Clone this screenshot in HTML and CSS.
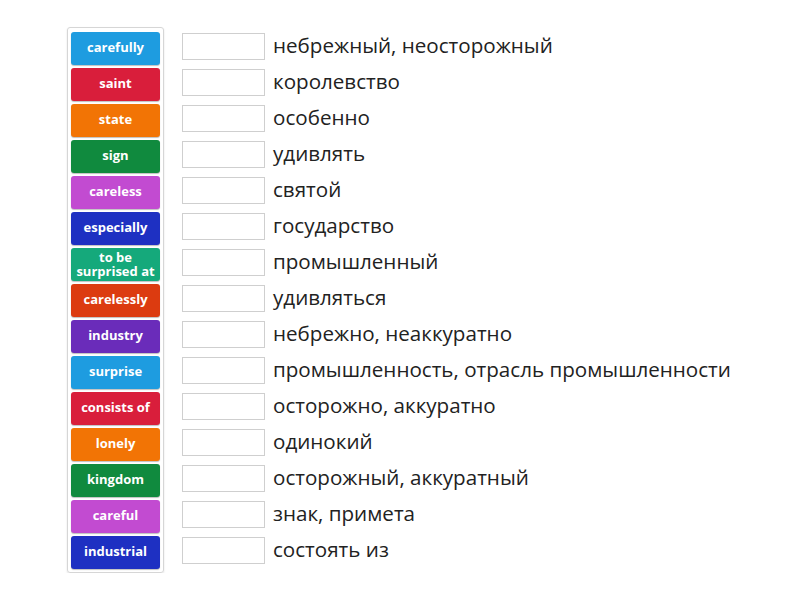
FILE: index.html
```html
<!DOCTYPE html>
<html lang="ru">
<head>
	<meta charset="UTF-8">
	<title>Match up</title>
<link rel="stylesheet" href="styles.css">
</head>
<body>
<div class="board">
	<ul class="words">
		<li class="c1">carefully</li>
		<li class="c2">saint</li>
		<li class="c3">state</li>
		<li class="c4">sign</li>
		<li class="c5">careless</li>
		<li class="c6">especially</li>
		<li class="c7 two">to be surprised at</li>
		<li class="c8">carelessly</li>
		<li class="c9">industry</li>
		<li class="c1">surprise</li>
		<li class="c2">consists of</li>
		<li class="c3">lonely</li>
		<li class="c4">kingdom</li>
		<li class="c5">careful</li>
		<li class="c6">industrial</li>
	</ul>
	<ul class="defs">
		<li><span class="slot"></span><span>небрежный, неосторожный</span></li>
		<li><span class="slot"></span><span>королевство</span></li>
		<li><span class="slot"></span><span>особенно</span></li>
		<li><span class="slot"></span><span>удивлять</span></li>
		<li><span class="slot"></span><span>святой</span></li>
		<li><span class="slot"></span><span>государство</span></li>
		<li><span class="slot"></span><span>промышленный</span></li>
		<li><span class="slot"></span><span>удивляться</span></li>
		<li><span class="slot"></span><span>небрежно, неаккуратно</span></li>
		<li><span class="slot"></span><span>промышленность, отрасль промышленности</span></li>
		<li><span class="slot"></span><span>осторожно, аккуратно</span></li>
		<li><span class="slot"></span><span>одинокий</span></li>
		<li><span class="slot"></span><span>осторожный, аккуратный</span></li>
		<li><span class="slot"></span><span>знак, примета</span></li>
		<li><span class="slot"></span><span>состоять из</span></li>
	</ul>
</div>
</body>
</html>
```

FILE: styles.css
```css
* { margin:0; padding:0; list-style:none; box-sizing:border-box;}
body { background:#fff; font-family:"Open Sans", "DejaVu Sans", sans-serif;}

.board { display:flex; align-items:flex-start; padding:27px 0 0 67px;}

.words { width:97px; border:1px solid #d6d6d6; border-radius:3px; padding:4px 3px 3px 3px; display:flex; flex-direction:column; gap:3px; box-shadow:0 1px 2px rgba(0,0,0,0.12);}
.words li { height:33px; border-radius:3px; color:#fff; font-size:13px; font-weight:bold; display:flex; align-items:center; justify-content:center; text-align:center; padding-bottom:3px; box-shadow:0 1px 1px rgba(0,0,0,0.25);}
.words li.two { line-height:14px; padding-bottom:1px;}

.c1 { background:#1e9ce0;}
.c2 { background:#d91e3b;}
.c3 { background:#f27405;}
.c4 { background:#108a3e;}
.c5 { background:#c24bd1;}
.c6 { background:#1e30c2;}
.c7 { background:#15a97b;}
.c8 { background:#dc3b10;}
.c9 { background:#6a2cba;}

.defs { margin-left:18px; padding-top:6px; display:flex; flex-direction:column; gap:3px;}
.defs li { height:33px; display:flex; align-items:flex-start; gap:8px; font-size:20.6px; color:#222; line-height:24px;}
.slot { width:83px; height:27px; border:1px solid #cfcfcf; background:#fff; flex:none;}
```
